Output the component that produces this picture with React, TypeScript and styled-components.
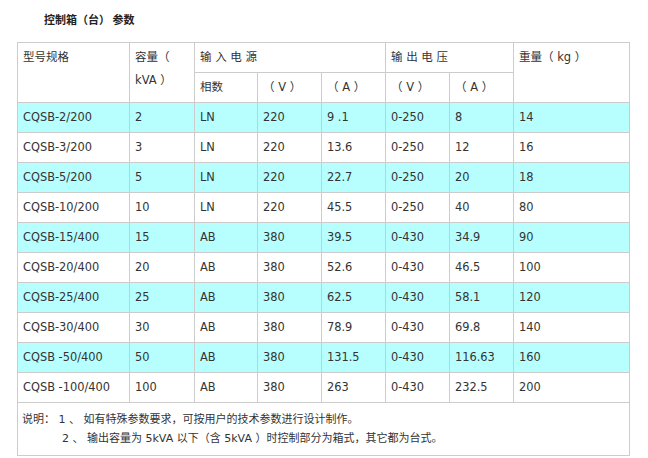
import React from 'react';
import styled, { createGlobalStyle } from 'styled-components';

const GlobalStyle = createGlobalStyle`
  html, body {
    margin: 0;
    padding: 0;
    background: #ffffff;
  }
  body {
    font-family: "DejaVu Sans", Verdana, "Noto Sans CJK SC", sans-serif;
    color: #333333;
  }
`;

const Page = styled.div`
  padding: 11px 0 0 17px;
  width: 631px;
`;

const Title = styled.div`
  font-family: "Noto Sans CJK SC", sans-serif;
  font-size: 11px;
  font-weight: bold;
  line-height: 16px;
  color: #222222;
  padding-left: 27px;
  margin-bottom: 15px;
`;

const Table = styled.table`
  border-collapse: collapse;
  table-layout: fixed;
  width: 612px;
  font-size: 11.4px;
`;

const Cell = styled.td<{ $shade?: boolean; $top?: boolean }>`
  border: 1px solid #cccccc;
  padding: 3px 5px;
  line-height: 23px;
  height: 23px;
  vertical-align: ${({ $top }) => ($top ? 'top' : 'middle')};
  background: ${({ $shade }) => ($shade ? '#b7ffff' : '#ffffff')};
  white-space: normal;
  word-break: break-word;
`;

const HeadCell = styled(Cell)`
  font-family: "DejaVu Sans", "Noto Sans CJK SC", sans-serif;
  font-size: 11.5px;
  color: #333333;
`;

const NoteCell = styled.td`
  border: 1px solid #cccccc;
  padding: 7px 5px 7px 4px;
  font-family: "DejaVu Sans", "Noto Sans CJK SC", sans-serif;
  font-size: 11px;
  line-height: 19px;
  color: #333333;
`;

const NoteLine = styled.div<{ $indent?: number }>`
  padding-left: ${({ $indent }) => $indent ?? 0}px;
  white-space: nowrap;
`;

const colWidths = [112, 65, 63, 64, 64, 64, 64, 116];

const rows: string[][] = [
  ['CQSB-2/200', '2', 'LN', '220', '9 .1', '0-250', '8', '14'],
  ['CQSB-3/200', '3', 'LN', '220', '13.6', '0-250', '12', '16'],
  ['CQSB-5/200', '5', 'LN', '220', '22.7', '0-250', '20', '18'],
  ['CQSB-10/200', '10', 'LN', '220', '45.5', '0-250', '40', '80'],
  ['CQSB-15/400', '15', 'AB', '380', '39.5', '0-430', '34.9', '90'],
  ['CQSB-20/400', '20', 'AB', '380', '52.6', '0-430', '46.5', '100'],
  ['CQSB-25/400', '25', 'AB', '380', '62.5', '0-430', '58.1', '120'],
  ['CQSB-30/400', '30', 'AB', '380', '78.9', '0-430', '69.8', '140'],
  ['CQSB -50/400', '50', 'AB', '380', '131.5', '0-430', '116.63', '160'],
  ['CQSB -100/400', '100', 'AB', '380', '263', '0-430', '232.5', '200'],
];

export default function App() {
  return (
    <>
      <GlobalStyle />
      <Page>
        <Title>控制箱（台） 参数</Title>
        <Table>
          <colgroup>
            {colWidths.map((w, i) => (
              <col key={i} style={{ width: w }} />
            ))}
          </colgroup>
          <thead>
            <tr>
              <HeadCell rowSpan={2} $top>型号规格</HeadCell>
              <HeadCell rowSpan={2} $top>容量（ kVA ）</HeadCell>
              <HeadCell colSpan={3}>输 入 电 源</HeadCell>
              <HeadCell colSpan={2}>输 出 电 压</HeadCell>
              <HeadCell rowSpan={2} $top>重量（ kg ）</HeadCell>
            </tr>
            <tr>
              <HeadCell>相数</HeadCell>
              <HeadCell>（ V ）</HeadCell>
              <HeadCell>（ A ）</HeadCell>
              <HeadCell>（ V ）</HeadCell>
              <HeadCell>（ A ）</HeadCell>
            </tr>
          </thead>
          <tbody>
            {rows.map((r, i) => (
              <tr key={r[0]}>
                {r.map((v, j) => (
                  <Cell key={j} $shade={i % 2 === 0}>
                    {v}
                  </Cell>
                ))}
              </tr>
            ))}
            <tr>
              <NoteCell colSpan={8}>
                <NoteLine>说明： 1 、 如有特殊参数要求，可按用户的技术参数进行设计制作。</NoteLine>
                <NoteLine $indent={40}>2 、 输出容量为 5kVA 以下（含 5kVA ）时控制部分为箱式，其它都为台式。</NoteLine>
              </NoteCell>
            </tr>
          </tbody>
        </Table>
      </Page>
    </>
  );
}
